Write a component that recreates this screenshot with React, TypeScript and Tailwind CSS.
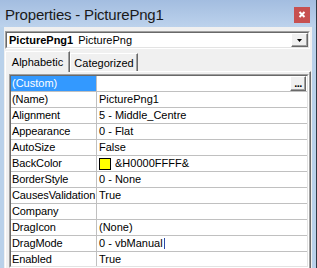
import React from "react";

type Row = { name: string; value?: string; kind?: "custom" | "color" | "caret" };

const rows: Row[] = [
  { name: "(Custom)", kind: "custom" },
  { name: "(Name)", value: "PicturePng1" },
  { name: "Alignment", value: "5 - Middle_Centre" },
  { name: "Appearance", value: "0 - Flat" },
  { name: "AutoSize", value: "False" },
  { name: "BackColor", value: "&H0000FFFF&", kind: "color" },
  { name: "BorderStyle", value: "0 - None" },
  { name: "CausesValidation", value: "True" },
  { name: "Company", value: "" },
  { name: "DragIcon", value: "(None)" },
  { name: "DragMode", value: "0 - vbManual", kind: "caret" },
  { name: "Enabled", value: "True" },
];

function PropRow({ row }: { row: Row }) {
  const selected = row.kind === "custom";
  return (
    <div className="flex h-[16px] shrink-0 border-b border-[#c0c0c0]">
      <div
        className={
          selected
            ? "w-[86px] shrink-0 border-r border-[#c0c0c0] bg-[#3399ff] pl-[1px] text-white leading-[15px] whitespace-nowrap overflow-hidden"
            : "w-[86px] shrink-0 border-r border-[#c0c0c0] pl-[1px] leading-[15px] whitespace-nowrap overflow-hidden tracking-[-0.1px]"
        }
      >
        {row.name}
      </div>
      <div className="flex-1 flex items-center pl-[2px] leading-[15px] whitespace-nowrap">
        {row.kind === "color" && (
          <span className="w-[12px] h-[12px] border border-black bg-[#ffff00] mr-[4px] shrink-0" />
        )}
        {row.value}
        {row.kind === "caret" && <span className="w-px h-[11px] bg-[#2b4aa8] ml-[1px]" />}
        {selected && (
          <button className="ml-auto mr-[1px] w-[16px] h-[15px] bg-[#f0f0f0] border border-t-white border-l-white border-r-[#696969] border-b-[#696969] shadow-[inset_-1px_-1px_0_#a0a0a0] flex items-end justify-center pb-[1px] text-[11px] font-bold leading-[11px] tracking-[-0.5px] text-black">
            ...
          </button>
        )}
      </div>
    </div>
  );
}

export default function App() {
  return (
    <div className="w-[317px] h-[268px] overflow-hidden flex flex-col bg-[#b9d1ea] border-r border-[#2f3a46] font-['Liberation_Sans',Arial,sans-serif] text-[11px] text-black">
      {/* title bar */}
      <div className="h-[27px] shrink-0 flex items-start justify-between pt-[6px] pl-[5px] pr-[6px] bg-gradient-to-b from-[#a3bde0] to-[#bcd2ec]">
        <span className="text-[15px] leading-[17px] tracking-[-0.2px] text-[#1a1a1a]">Properties - PicturePng1</span>
        <button className="mt-[1px] w-[16px] h-[16px] bg-[#c75050] flex items-center justify-center">
          <svg width="16" height="16" viewBox="0 0 16 16">
            <path d="M5.5 5 L10.5 10 M10.5 5 L5.5 10" stroke="white" strokeWidth="2" fill="none" />
          </svg>
        </button>
      </div>

      <div className="flex-1 min-h-0 flex flex-col mx-[4px] bg-[#f0f0f0]">
        {/* object combo */}
        <div className="mt-[4px] ml-[1px] mr-[2px] h-[18px] shrink-0 border border-t-[#a0a0a0] border-l-[#a0a0a0] border-r-white border-b-white">
          <div className="h-full flex items-center bg-white border border-t-[#696969] border-l-[#696969] border-r-[#e3e3e3] border-b-[#e3e3e3]">
            <span className="pl-[2px] font-bold leading-[14px]">PicturePng1</span>
            <span className="ml-[5px] leading-[14px]">PicturePng</span>
            <div className="ml-auto w-[17px] h-full bg-[#f0f0f0] border border-t-white border-l-white border-r-[#696969] border-b-[#696969] shadow-[inset_-1px_-1px_0_#a0a0a0] flex items-center justify-center">
              <svg width="5" height="3" viewBox="0 0 5 3">
                <path d="M0 0 H5 L2.5 3 Z" fill="black" />
              </svg>
            </div>
          </div>
        </div>

        {/* tabs */}
        <div className="mt-[2px] h-[20px] shrink-0 flex items-end pl-[1px]">
          <div className="relative z-10 mb-[-1px] w-[65px] h-[21px] bg-[#f0f0f0] border-t border-l border-white border-r border-r-[#696969] shadow-[inset_-1px_0_0_#a0a0a0] flex justify-center pt-[3px] leading-[15px]">
            Alphabetic
          </div>
          <div className="w-[68px] h-[18px] bg-[#f0f0f0] border-t border-l border-white border-r border-r-[#696969] shadow-[inset_-1px_0_0_#a0a0a0] flex justify-center pt-[2px] leading-[15px]">
            Categorized
          </div>
        </div>

        {/* tab page */}
        <div className="flex-1 min-h-0 ml-[1px] mr-[1px] border-t border-l border-white border-r border-r-[#696969] shadow-[inset_-1px_0_0_#a0a0a0] pt-[2px] pl-[3px] pr-[1px] overflow-hidden">
          <div className="h-full border border-t-[#a0a0a0] border-l-[#a0a0a0] border-r-white border-b-white">
            <div className="h-full flex flex-col bg-white border border-t-[#696969] border-l-[#696969] border-r-[#e3e3e3] border-b-[#e3e3e3] overflow-hidden">
              {rows.map((r) => (
                <PropRow key={r.name} row={r} />
              ))}
            </div>
          </div>
        </div>
      </div>
    </div>
  );
}
